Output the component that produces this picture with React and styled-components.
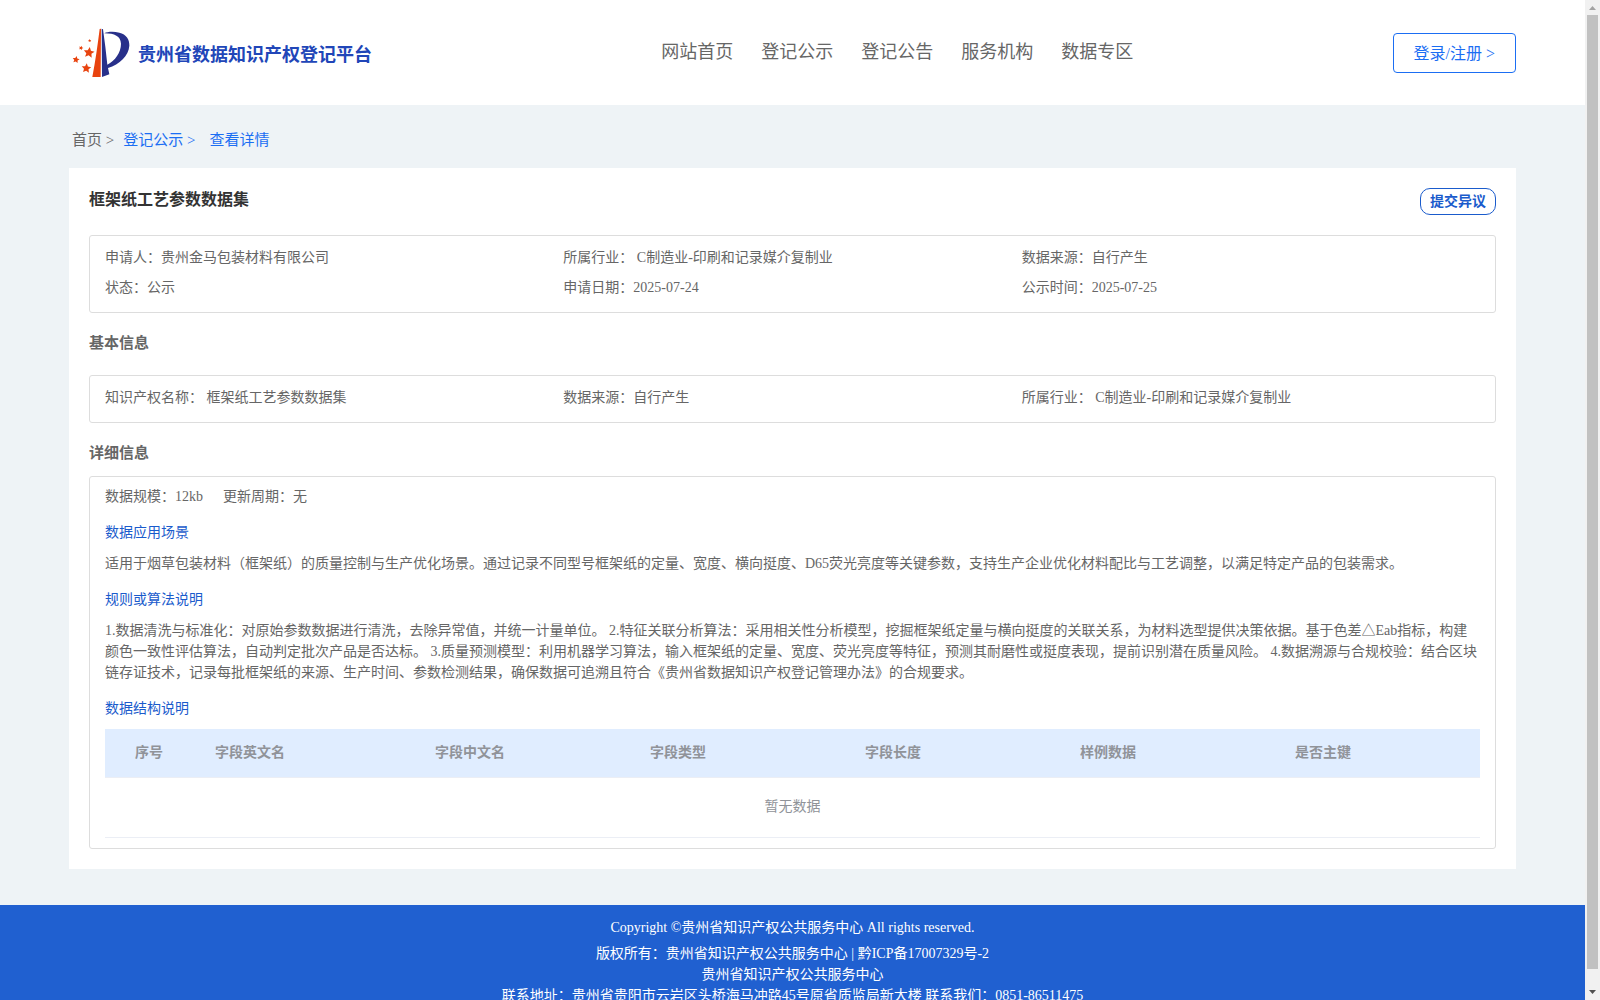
import React from 'react';
import styled, {createGlobalStyle} from "styled-components";

const GlobalStyle = createGlobalStyle`
    * {
        box-sizing: border-box;
    }

    body {
        margin: 0;
        font-family: "Liberation Serif", "Noto Sans CJK SC", serif;
        font-size: 14px;
        line-height: 20px;
        color: #666666;
        background-color: #eef3f6;
    }

    a {
        color: inherit;
        text-decoration: none;
    }
`

const Screen = styled.div`
    display: flex;
    height: 100vh;
    overflow: hidden;
`

const Page = styled.div`
    flex: 1;
    min-width: 0;
    overflow: hidden;
`

const Header = styled.header`
    display: flex;
    align-items: center;
    justify-content: space-between;
    height: 105px;
    padding: 0 69px;
    background-color: #ffffff;
`

const Brand = styled.a`
    display: flex;
    align-items: center;
    gap: 8px;
    padding: 0 30px 0 3px;
`

const BrandName = styled.span`
    padding-top: 4px;
    font-size: 18px;
    line-height: 24px;
    font-weight: bold;
    color: #2146b8;
`

const Nav = styled.nav`
    display: flex;
    gap: 28px;
    padding-bottom: 2px;
    font-size: 18px;
    line-height: 24px;
`

const LoginButton = styled.button`
    height: 40px;
    padding: 0 20px 2px;
    border: 1px solid #1b6ef3;
    border-radius: 4px;
    background-color: #ffffff;
    color: #1b6ef3;
    font-family: inherit;
    font-size: 16px;
`

const Breadcrumb = styled.nav`
    display: flex;
    padding: 24px 72px 16px;
    font-size: 15px;
    line-height: 23px;
`

const Crumb = styled.a`
    margin-right: ${props => props.$gap}px;
    color: ${props => props.$active ? '#1b6ef3' : '#666666'};
`

const Card = styled.main`
    margin: 0 69px 36px;
    padding: 20px;
    background-color: #ffffff;
`

const CardHeader = styled.div`
    display: flex;
    align-items: flex-start;
    justify-content: space-between;
    height: 47px;
`

const Title = styled.h1`
    margin: 0;
    font-size: 16px;
    line-height: 24px;
    color: #333333;
`

const ObjectionButton = styled.button`
    height: 27px;
    padding: 0 9px;
    border: 1px solid #1a5bcc;
    border-radius: 10px;
    background-color: #ffffff;
    color: #1a5bcc;
    font-family: inherit;
    font-size: 14px;
    font-weight: bold;
    line-height: 20px;
`

const SectionTitle = styled.h2`
    margin: ${props => props.$compact ? '20px 0 13px' : '20px 0 22px'};
    font-size: 15px;
    line-height: 20px;
`

const Panel = styled.section`
    border: 1px solid #dddddd;
    border-radius: 3px;
    padding: ${props => props.$detail ? '10px 15px' : '7px 15px 9px'};
`

const InfoGrid = styled.div`
    display: grid;
    grid-template-columns: repeat(3, 1fr);
    line-height: 30px;
`

const Scale = styled.div`
    display: flex;
    gap: 20px;
`

const SubTitle = styled.h3`
    margin: 15px 0 10px;
    font-size: 14px;
    font-weight: normal;
    line-height: 21px;
    color: #1a5bcc;
`

const Paragraph = styled.p`
    margin: 0;
    line-height: 21px;
`

const FieldTable = styled.table`
    width: 100%;
    table-layout: fixed;
    border-collapse: collapse;
    color: #909399;
`

const HeadCell = styled.th`
    width: ${props => props.$width};
    height: 48px;
    padding: 0 0 0 30px;
    border-bottom: 1px solid #ebeef5;
    background-color: #e0edff;
    text-align: left;
`

const EmptyCell = styled.td`
    height: 60px;
    padding: 0;
    border-bottom: 1px solid #ebeef5;
    text-align: center;
`

const Footer = styled.footer`
    padding: 12px 0;
    background-color: #2060d0;
    color: #ffffff;
    line-height: 21px;
    text-align: center;
`

const Copyright = styled.div`
    margin-bottom: 5px;
`

const ScrollRail = styled.div`
    display: flex;
    flex-direction: column;
    align-items: center;
    width: 15px;
    background-color: #f1f1f1;
`

const ScrollThumb = styled.div`
    flex: 1;
    width: 11px;
    margin-bottom: 16px;
    background-color: #c1c1c1;
`

const navItems = ['网站首页', '登记公示', '登记公告', '服务机构', '数据专区'];

const summary = [
    '申请人：贵州金马包装材料有限公司',
    '所属行业： C制造业-印刷和记录媒介复制业',
    '数据来源：自行产生',
    '状态：公示',
    '申请日期：2025-07-24',
    '公示时间：2025-07-25',
];

const basics = [
    '知识产权名称： 框架纸工艺参数数据集',
    '数据来源：自行产生',
    '所属行业： C制造业-印刷和记录媒介复制业',
];

const columns = [
    {label: '序号', width: '80px'},
    {label: '字段英文名', width: '220px'},
    {label: '字段中文名', width: 'auto'},
    {label: '字段类型', width: 'auto'},
    {label: '字段长度', width: 'auto'},
    {label: '样例数据', width: 'auto'},
    {label: '是否主键', width: 'auto'},
];

const stars = [
    {x: 87, y: 113, r: 17, turn: 8},
    {x: 63, y: 99, r: 7, turn: 20},
    {x: 89, y: 77, r: 5, turn: 0},
    {x: 48, y: 134, r: 11, turn: 10},
    {x: 79, y: 160, r: 15, turn: 5},
];

function starPoints({x, y, r, turn}) {
    const points = [];
    for(let i = 0; i < 10; i++) {
        const radius = i % 2 === 0 ? r : r * 0.48;
        const angle = (turn - 90 + i * 36) * Math.PI / 180;
        points.push((x + radius * Math.cos(angle)).toFixed(1) + ',' + (y + radius * Math.sin(angle)).toFixed(1));
    }
    return points.join(' ');
}

function Logo() {
    return (
        <svg width="58" height="50" viewBox="36 39 174 150" aria-hidden="true">
            {stars.map((star) => (
                <polygon key={'star' + star.x} points={starPoints(star)} fill="#e8430f" />
            ))}
            <path d="M119 42 L123 41 L122 186 L97 186 C106 140 113 90 119 42 Z" fill="#e8430f" />
            <path d="M125 41 L129 43 L136 95 L142 149 C165 137 183 112 183 86 C182 64 164 55 133 55 C142 50 161 49 178 53 C199 58 209 73 208 92 C206 122 179 148 144 159 L148 178 L126 186 Z" fill="#28308a" />
        </svg>
    );
}

function Info({items}) {
    return (
        <InfoGrid>
            {items.map((item) => <div key={item}>{item}</div>)}
        </InfoGrid>
    );
}

function App() {
    return (
        <Screen>
            <GlobalStyle />
            <Page>
                <Header>
                    <Brand href="#">
                        <Logo />
                        <BrandName>贵州省数据知识产权登记平台</BrandName>
                    </Brand>
                    <Nav>
                        {navItems.map((item) => <a href="#" key={item}>{item}</a>)}
                    </Nav>
                    <LoginButton>登录/注册 &gt;</LoginButton>
                </Header>
                <Breadcrumb>
                    <Crumb href="#" $gap={9}>首页 &gt;</Crumb>
                    <Crumb href="#" $gap={14} $active>登记公示 &gt;</Crumb>
                    <Crumb href="#" $gap={0} $active>查看详情</Crumb>
                </Breadcrumb>
                <Card>
                    <CardHeader>
                        <Title>框架纸工艺参数数据集</Title>
                        <ObjectionButton>提交异议</ObjectionButton>
                    </CardHeader>
                    <Panel>
                        <Info items={summary} />
                    </Panel>
                    <SectionTitle>基本信息</SectionTitle>
                    <Panel>
                        <Info items={basics} />
                    </Panel>
                    <SectionTitle $compact>详细信息</SectionTitle>
                    <Panel $detail>
                        <Scale>
                            <span>数据规模：12kb</span>
                            <span>更新周期：无</span>
                        </Scale>
                        <SubTitle>数据应用场景</SubTitle>
                        <Paragraph>适用于烟草包装材料（框架纸）的质量控制与生产优化场景。通过记录不同型号框架纸的定量、宽度、横向挺度、D65荧光亮度等关键参数，支持生产企业优化材料配比与工艺调整，以满足特定产品的包装需求。</Paragraph>
                        <SubTitle>规则或算法说明</SubTitle>
                        <Paragraph>1.数据清洗与标准化：对原始参数数据进行清洗，去除异常值，并统一计量单位。 2.特征关联分析算法：采用相关性分析模型，挖掘框架纸定量与横向挺度的关联关系，为材料选型提供决策依据。基于色差△Eab指标，构建颜色一致性评估算法，自动判定批次产品是否达标。 3.质量预测模型：利用机器学习算法，输入框架纸的定量、宽度、荧光亮度等特征，预测其耐磨性或挺度表现，提前识别潜在质量风险。 4.数据溯源与合规校验：结合区块链存证技术，记录每批框架纸的来源、生产时间、参数检测结果，确保数据可追溯且符合《贵州省数据知识产权登记管理办法》的合规要求。</Paragraph>
                        <SubTitle>数据结构说明</SubTitle>
                        <FieldTable>
                            <thead>
                                <tr>
                                    {columns.map((column) => (
                                        <HeadCell key={column.label} $width={column.width}>{column.label}</HeadCell>
                                    ))}
                                </tr>
                            </thead>
                            <tbody>
                                <tr>
                                    <EmptyCell colSpan={columns.length}>暂无数据</EmptyCell>
                                </tr>
                            </tbody>
                        </FieldTable>
                    </Panel>
                </Card>
                <Footer>
                    <Copyright>Copyright ©贵州省知识产权公共服务中心 All rights reserved.</Copyright>
                    <div>版权所有：贵州省知识产权公共服务中心 | 黔ICP备17007329号-2</div>
                    <div>贵州省知识产权公共服务中心</div>
                    <div>联系地址：贵州省贵阳市云岩区头桥海马冲路45号原省质监局新大楼 联系我们：0851-86511475</div>
                </Footer>
            </Page>
            <ScrollRail aria-hidden="true">
                <svg width="15" height="15" viewBox="0 0 15 15">
                    <path d="M4 10 L7.5 6 L11 10 Z" fill="#a3a3a3" />
                </svg>
                <ScrollThumb />
                <svg width="15" height="15" viewBox="0 0 15 15">
                    <path d="M4 5 L11 5 L7.5 9 Z" fill="#505050" />
                </svg>
            </ScrollRail>
        </Screen>
    );
}

export default App;
